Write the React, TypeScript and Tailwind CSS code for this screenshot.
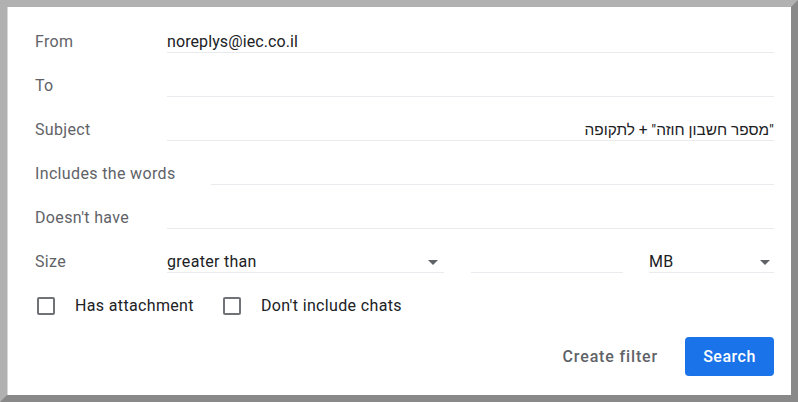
import type { ReactNode } from "react";

const font = { fontFamily: "Roboto, 'Liberation Sans', sans-serif" };

function Field({ children, className = "" }: { children?: ReactNode; className?: string }) {
  return (
    <div className={`h-[25px] border-b border-[#e8eaed] pt-[4px] leading-5 text-[#202124] ${className}`}>
      {children}
    </div>
  );
}

function Row({ label, labelW = "w-[132px]", children }: { label: string; labelW?: string; children: ReactNode }) {
  return (
    <div className="flex h-[44px] items-end">
      <div className={`${labelW} shrink-0 pb-[1px] leading-5 tracking-[0.35px] text-[#5f6368]`}>{label}</div>
      {children}
    </div>
  );
}

function Caret() {
  return (
    <svg width="10" height="5" viewBox="0 0 10 5" className="mt-[8px]">
      <path d="M0 0h10L5 5z" fill="#5f6368" />
    </svg>
  );
}

function Checkbox({ label }: { label: string }) {
  return (
    <div className="flex items-center">
      <span className="ml-[2px] h-[18px] w-[18px] rounded-[2px] border-2 border-[#6f7378]" />
      <span className="ml-5 tracking-[0.35px] text-[#202124]">{label}</span>
    </div>
  );
}

export default function App() {
  return (
    <div
      className="h-[402px] w-[798px] border-[7px] border-t-[#b1b1b1] border-l-[#b1b1b1] border-r-[#898989] border-b-[#898989] bg-white"
      style={font}
    >
      <div className="h-full border-l border-[#d8d8d8] pl-[27px] pr-[17px] pt-[2px] text-[16px]">
        <Row label="From">
          <Field className="flex-1 tracking-[0.1px]">noreplys@iec.co.il</Field>
        </Row>
        <Row label="To">
          <Field className="flex-1" />
        </Row>
        <Row label="Subject">
          <Field className="flex-1 text-right">
            <span dir="rtl" className="text-[15.4px]">"מספר חשבון חוזה" + לתקופה</span>
          </Field>
        </Row>
        <Row label="Includes the words" labelW="w-[176px]">
          <Field className="flex-1" />
        </Row>
        <Row label="Doesn't have">
          <Field className="flex-1" />
        </Row>
        <Row label="Size">
          <Field className="flex w-[277px] items-start justify-between pr-[6px]">
            <span className="tracking-[0.3px]">greater than</span>
            <Caret />
          </Field>
          <Field className="ml-[27px] w-[152px]" />
          <Field className="ml-[26px] flex flex-1 items-start justify-between pr-[4px]">
            <span className="tracking-[0.3px]">MB</span>
            <Caret />
          </Field>
        </Row>
        <div className="flex h-[44px] items-end pb-[1px]">
          <div className="flex h-5 items-center gap-[27px]">
            <Checkbox label="Has attachment" />
            <Checkbox label="Don't include chats" />
          </div>
        </div>
        <div className="mt-5 flex items-center justify-end">
          <button className="mr-[15px] px-3 font-medium tracking-[0.85px] text-[#5f6368]">Create filter</button>
          <button className="h-[39px] w-[89px] rounded-[4px] bg-[#1a73e8] font-medium tracking-[0.5px] text-white">
            Search
          </button>
        </div>
      </div>
    </div>
  );
}
